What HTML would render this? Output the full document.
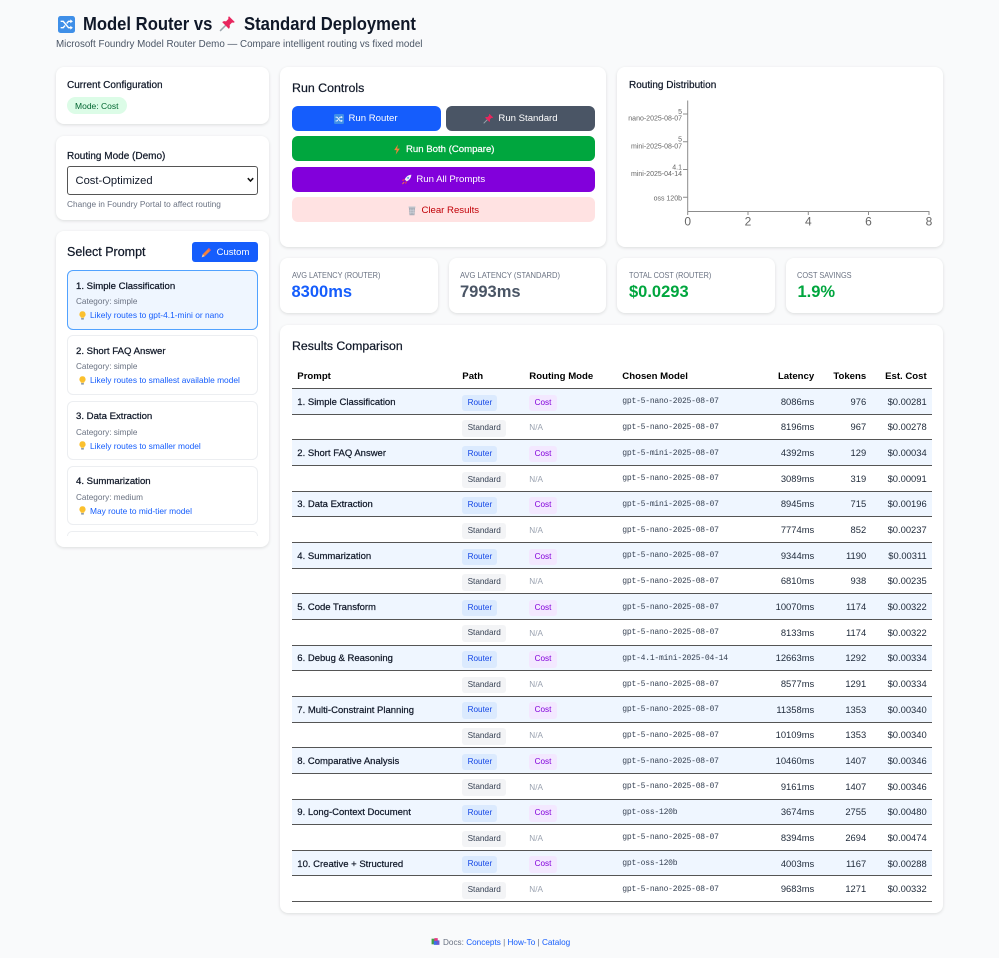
<!DOCTYPE html>
<html lang="en"><head><meta charset="utf-8"><title>Model Router vs Standard Deployment</title>
<style>
*{box-sizing:border-box;margin:0;padding:0}
html,body{width:999px;height:958px;overflow:hidden;background:#f9fafb;font-family:"Liberation Sans","Noto Sans CJK JP",sans-serif;color:#101828}
.a{position:absolute;white-space:nowrap}
.card{position:absolute;background:#fff;border-radius:8px;box-shadow:0 1px 3px rgba(0,0,0,.12)}
svg{display:inline-block;vertical-align:middle}
.btn{position:absolute;border-radius:6px;color:#fff;font-size:9.6px;display:flex;align-items:center;justify-content:center;gap:4px;height:25px;padding-top:1.5px}
.pc{position:absolute;left:67px;width:191px;height:59.5px;background:#fff;border:1px solid #eceef1;border-radius:6px}
.pc b{position:absolute;left:8px;top:9.5px;font-size:9.6px;font-weight:400;-webkit-text-stroke:.25px #101828;white-space:nowrap;color:#101828}
.pc i{position:absolute;left:8px;top:26px;font-style:normal;font-size:8.2px;color:#6a7282;white-space:nowrap}
.pc u{position:absolute;left:9.5px;top:39px;text-decoration:none;font-size:8.4px;color:#155dfc;white-space:nowrap}
.pc u svg{position:absolute;left:0;top:.5px}
.pc u span{padding-left:12.5px}
.sl{position:absolute;top:271px;font-size:8.2px;color:#6a7282;white-space:nowrap;transform-origin:left center}
.sv{position:absolute;top:283px;font-size:16.5px;font-weight:700;white-space:nowrap}
#t{position:absolute;left:292px;top:363px;width:640px;font-size:9.4px;color:#1e2939}
.r{display:grid;grid-template-columns:165px 67px 93px 133px 69.5px 52px 60.5px;height:25.67px;align-items:center;border-bottom:1px solid #555}
.r>span{padding:0 5.3px;white-space:nowrap}
.h{height:26px;border-bottom:1px solid #555;color:#000;font-size:9.6px}
.h>span{font-weight:700;position:relative;top:1px}
.p{-webkit-text-stroke:.22px #101828;color:#101828;font-size:9.5px;position:relative;top:1px}
.o{background:#eff6ff}
.ra{text-align:right}
.m{font-family:"Liberation Mono","DejaVu Sans Mono",monospace;font-size:8.05px;letter-spacing:-.24px;color:#364153;position:relative;top:.5px}
.bd{display:inline-block;font-style:normal;font-size:8.2px;line-height:16px;height:16.5px;padding:0 5.3px;border-radius:3px;position:relative;top:1.5px}
.ro{background:#dbeafe;color:#1447e6}.co{background:#f3e8ff;color:#8200db}.st{background:#f3f4f6;color:#364153}
.na{color:#99a1af;font-size:8.2px;position:relative;top:1px}
a{color:#155dfc;text-decoration:none}
</style></head><body>
<svg width="0" height="0" style="position:absolute"><defs>
<symbol id="sh" viewBox="0 0 16 16"><rect width="16" height="16" rx="2.4" fill="#3f8fe8"/><path d="M2.5 5h2.4l5 6h2M2.5 11h2.4l1.7-2M8.2 7 9.9 5h2" fill="none" stroke="#fff" stroke-width="1.4"/><path d="M11.6 3.2 14 5l-2.4 1.800zM11.6 9.200 14 11l-2.400 1.800z" fill="#fff"/></symbol>
<symbol id="pin" viewBox="0 0 16 16"><path d="M1 15 6.500 9.500" stroke="#9aa5ad" stroke-width="1.400"/><path d="M9.400 1.200 14.800 6.600c-.7.8-1.700.8-2.500.5L10 9.400c.5 1.400.2 2.700-.7 3.600L3 6.700c.9-.9 2.200-1.200 3.600-.7l2.300-2.300c-.3-.8-.3-1.800.5-2.500z" fill="#e8265e"/></symbol>
<symbol id="bolt" viewBox="0 0 16 16"><path d="M9.500 0 3.500 9h4l-1.500 7 6.500-9.500H8.200z" fill="#f4813c"/></symbol>
<symbol id="rk" viewBox="0 0 16 16"><path d="M15 1c-4.500.2-7.500 2.600-9.700 6.800l3 3C12.500 8.500 14.800 5.500 15 1z" fill="#eeeef6"/><circle cx="10.300" cy="5.700" r="1.300" fill="#3f8fe8"/><path d="M5.500 7.500 2.500 8l-1 2 3-.3zM8.500 10.500 8 13.500l-2 1 .3-3z" fill="#e8345a"/><path d="M4.500 11.500c-1.500.5-2.500 1.800-3 3.500 1.700-.5 3-1.500 3.500-3z" fill="#f4813c"/></symbol>
<symbol id="tr" viewBox="0 0 16 16"><path d="M3 2.500h10l-1 13H4z" fill="#a9aeb8"/><path d="M2.500 1.500h11v2h-11z" fill="#c4c8d0"/><path d="M5.500 5v9M8 5v9M10.500 5v9M4 8h8M4 11h8" stroke="#d5d8df" stroke-width=".7"/></symbol>
<symbol id="pe" viewBox="0 0 16 16"><path d="M11.500 1.500 14.500 4.500 5.500 13.500 2.500 10.500z" fill="#f4813c"/><path d="M2.500 10.500 1 15l4.500-1.500z" fill="#f8c9a0"/><path d="M11.500 1.500 14.500 4.500 13 6 10 3z" fill="#e8556a"/></symbol>
<symbol id="bu" viewBox="0 0 16 16"><path d="M8 .5a5.500 5.500 0 0 0-3 10.100V12h6v-1.400A5.500 5.500 0 0 0 8 .5z" fill="#fbc02d"/><rect x="5.500" y="12.500" width="5" height="2.800" rx=".8" fill="#8d9aa5"/></symbol>
<symbol id="bk" viewBox="0 0 16 16"><rect x="1" y="3" width="6" height="10" fill="#43a047"/><rect x="6" y="2" width="6" height="10" fill="#e53985"/><rect x="5" y="7" width="6" height="7" fill="#3f6fe8"/><rect x="10" y="6" width="5" height="8" fill="#6a5acd"/></symbol>
</defs></svg>

<svg class="a" style="left:58px;top:15.5px" width="17" height="17"><use href="#sh"/></svg>
<div class="a" style="left:83px;top:11.5px;font-size:18.3px;line-height:23px;font-weight:700;color:#101828;transform:scaleX(.91);transform-origin:left center">Model Router vs</div>
<svg class="a" style="left:219px;top:15px" width="17" height="17"><use href="#pin"/></svg>
<div class="a" style="left:243.5px;top:11.5px;font-size:18.3px;line-height:23px;font-weight:700;color:#101828;transform:scaleX(.91);transform-origin:left center">Standard Deployment</div>
<div class="a" style="left:56px;top:37.5px;font-size:9.8px;line-height:13px;color:#4a5565">Microsoft Foundry Model Router Demo — Compare intelligent routing vs fixed model</div>

<div class="card" style="left:56px;top:67px;width:213px;height:57px"></div>
<div class="a" style="left:67px;top:80px;font-size:10px;line-height:12px;-webkit-text-stroke:.22px #101828">Current Configuration</div>
<div class="a" style="left:67px;top:97px;width:59.5px;height:17px;border-radius:9px;background:#dcfce7;color:#016630;font-size:8.5px;line-height:18px;text-align:center">Mode: Cost</div>

<div class="card" style="left:56px;top:136px;width:213px;height:84px"></div>
<div class="a" style="left:67px;top:151px;font-size:10px;line-height:12px;-webkit-text-stroke:.22px #101828">Routing Mode (Demo)</div>
<div class="a" style="left:67px;top:166px;width:191px;height:29px;border:1px solid #555;border-radius:3px;background:#fff;font-size:11.2px;line-height:29px;padding-left:7.5px;color:#101828">Cost-Optimized<svg style="position:absolute;right:3px;top:10px" width="7" height="6" viewBox="0 0 7 6"><path d="M.8 1.200 3.500 4 6.200 1.200" fill="none" stroke="#111" stroke-width="1.500"/></svg></div>
<div class="a" style="left:67px;top:199px;font-size:8.3px;line-height:11px;color:#6a7282">Change in Foundry Portal to affect routing</div>

<div class="card" style="left:56px;top:231px;width:213px;height:316px"></div>
<div class="a" style="left:67px;top:244px;font-size:12.5px;line-height:16px;-webkit-text-stroke:.22px #101828">Select Prompt</div>
<div class="btn" style="left:192px;top:242px;width:66px;height:20px;background:#155dfc;border-radius:3px;font-size:9.5px;padding-top:0"><svg width="11" height="11"><use href="#pe"/></svg><span style="padding-left:1px">Custom</span></div>
<div class="pc" style="top:270px;background:#eff6ff;border-color:#51a2ff"><b>1. Simple Classification</b><i>Category: simple</i><u><svg width="9" height="9"><use href="#bu"/></svg><span>Likely routes to gpt-4.1-mini or nano</span></u></div>
<div class="pc" style="top:335.3px"><b>2. Short FAQ Answer</b><i>Category: simple</i><u><svg width="9" height="9"><use href="#bu"/></svg><span>Likely routes to smallest available model</span></u></div>
<div class="pc" style="top:400.5px"><b>3. Data Extraction</b><i>Category: simple</i><u><svg width="9" height="9"><use href="#bu"/></svg><span>Likely routes to smaller model</span></u></div>
<div class="pc" style="top:465.7px"><b>4. Summarization</b><i>Category: medium</i><u><svg width="9" height="9"><use href="#bu"/></svg><span>May route to mid-tier model</span></u></div>
<div class="a" style="left:67px;top:530.7px;width:191px;height:5.3px;background:#fff;border:1px solid #eceef1;border-bottom:0;border-radius:6px 6px 0 0"></div>

<div class="card" style="left:280px;top:67px;width:326px;height:180px"></div>
<div class="a" style="left:292px;top:80px;font-size:12.4px;line-height:16px;-webkit-text-stroke:.22px #101828">Run Controls</div>
<div class="btn" style="left:291.5px;top:105.5px;width:149px;background:#155dfc"><svg width="10" height="10"><use href="#sh"/></svg> Run Router</div>
<div class="btn" style="left:446px;top:105.5px;width:149px;background:#4a5565"><svg width="11" height="11"><use href="#pin"/></svg> Run Standard</div>
<div class="btn" style="left:291.5px;top:136px;width:303.5px;background:#00a63e;-webkit-text-stroke:.2px #fff"><svg width="10" height="11"><use href="#bolt"/></svg> Run Both (Compare)</div>
<div class="btn" style="left:291.5px;top:166.5px;width:303.5px;background:#8200db"><svg width="11" height="11"><use href="#rk"/></svg> Run All Prompts</div>
<div class="btn" style="left:291.5px;top:197px;width:303.5px;background:#ffe2e2;color:#c10007"><svg width="10" height="11"><use href="#tr"/></svg> Clear Results</div>

<div class="card" style="left:617px;top:67px;width:326px;height:180px"></div>
<div class="a" style="left:629px;top:80px;font-size:10px;line-height:12px;-webkit-text-stroke:.22px #101828">Routing Distribution</div>
<svg class="a" style="left:617px;top:90px" width="326" height="140" viewBox="617 90 326 140" font-family="Liberation Sans,sans-serif" fill="#666">
<path d="M687.7 100.5V211.500M683 114h4.700M683 141.700h4.700M683 169.500h4.700M683 197.300h4.700M687.200 211.500H929.500M687.700 211V215M748 211V215M808.300 211V215M868.500 211V215M929 211V215" fill="none" stroke="#8c8c8c" stroke-width="1"/>
<g font-size="7" text-anchor="end">
<text x="682" y="114">5</text><text x="682" y="120.500">nano-2025-08-07</text>
<text x="682" y="141.700">5</text><text x="682" y="148.300">mini-2025-08-07</text>
<text x="682" y="169.500">4.1</text><text x="682" y="176">mini-2025-04-14</text>
<text x="682" y="200.500">oss 120b</text></g>
<g font-size="12" text-anchor="middle"><text x="687.700" y="225.500">0</text><text x="748" y="225.500">2</text><text x="808.300" y="225.500">4</text><text x="868.500" y="225.500">6</text><text x="929" y="225.500">8</text></g>
</svg>

<div class="card" style="left:280px;top:258px;width:158px;height:55px"></div>
<div class="card" style="left:449px;top:258px;width:157px;height:55px"></div>
<div class="card" style="left:617px;top:258px;width:158px;height:55px"></div>
<div class="card" style="left:786px;top:258px;width:157px;height:55px"></div>
<div class="sl" style="left:292px;transform:scaleX(.9)">AVG LATENCY (ROUTER)</div><div class="sv" style="left:291.5px;color:#155dfc">8300ms</div>
<div class="sl" style="left:460px;transform:scaleX(.925)">AVG LATENCY (STANDARD)</div><div class="sv" style="left:460px;color:#4a5565">7993ms</div>
<div class="sl" style="left:629px;transform:scaleX(.89)">TOTAL COST (ROUTER)</div><div class="sv" style="left:629px;color:#00a63e">$0.0293</div>
<div class="sl" style="left:797px;transform:scaleX(.9)">COST SAVINGS</div><div class="sv" style="left:797.5px;color:#00a63e">1.9%</div>

<div class="card" style="left:280px;top:325px;width:663px;height:588px"></div>
<div class="a" style="left:292px;top:338px;font-size:12.3px;line-height:16px;-webkit-text-stroke:.22px #101828">Results Comparison</div>
<div id="t">
<div class="r h"><span>Prompt</span><span>Path</span><span>Routing Mode</span><span>Chosen Model</span><span class="ra">Latency</span><span class="ra">Tokens</span><span class="ra">Est. Cost</span></div>
<div class="r o"><span class="p">1. Simple Classification</span><span><i class="bd ro">Router</i></span><span><i class="bd co">Cost</i></span><span class="m">gpt-5-nano-2025-08-07</span><span class="ra">8086ms</span><span class="ra">976</span><span class="ra">$0.00281</span></div>
<div class="r"><span></span><span><i class="bd st">Standard</i></span><span class="na">N/A</span><span class="m">gpt-5-nano-2025-08-07</span><span class="ra">8196ms</span><span class="ra">967</span><span class="ra">$0.00278</span></div>
<div class="r o"><span class="p">2. Short FAQ Answer</span><span><i class="bd ro">Router</i></span><span><i class="bd co">Cost</i></span><span class="m">gpt-5-mini-2025-08-07</span><span class="ra">4392ms</span><span class="ra">129</span><span class="ra">$0.00034</span></div>
<div class="r"><span></span><span><i class="bd st">Standard</i></span><span class="na">N/A</span><span class="m">gpt-5-nano-2025-08-07</span><span class="ra">3089ms</span><span class="ra">319</span><span class="ra">$0.00091</span></div>
<div class="r o"><span class="p">3. Data Extraction</span><span><i class="bd ro">Router</i></span><span><i class="bd co">Cost</i></span><span class="m">gpt-5-mini-2025-08-07</span><span class="ra">8945ms</span><span class="ra">715</span><span class="ra">$0.00196</span></div>
<div class="r"><span></span><span><i class="bd st">Standard</i></span><span class="na">N/A</span><span class="m">gpt-5-nano-2025-08-07</span><span class="ra">7774ms</span><span class="ra">852</span><span class="ra">$0.00237</span></div>
<div class="r o"><span class="p">4. Summarization</span><span><i class="bd ro">Router</i></span><span><i class="bd co">Cost</i></span><span class="m">gpt-5-nano-2025-08-07</span><span class="ra">9344ms</span><span class="ra">1190</span><span class="ra">$0.00311</span></div>
<div class="r"><span></span><span><i class="bd st">Standard</i></span><span class="na">N/A</span><span class="m">gpt-5-nano-2025-08-07</span><span class="ra">6810ms</span><span class="ra">938</span><span class="ra">$0.00235</span></div>
<div class="r o"><span class="p">5. Code Transform</span><span><i class="bd ro">Router</i></span><span><i class="bd co">Cost</i></span><span class="m">gpt-5-nano-2025-08-07</span><span class="ra">10070ms</span><span class="ra">1174</span><span class="ra">$0.00322</span></div>
<div class="r"><span></span><span><i class="bd st">Standard</i></span><span class="na">N/A</span><span class="m">gpt-5-nano-2025-08-07</span><span class="ra">8133ms</span><span class="ra">1174</span><span class="ra">$0.00322</span></div>
<div class="r o"><span class="p">6. Debug &amp; Reasoning</span><span><i class="bd ro">Router</i></span><span><i class="bd co">Cost</i></span><span class="m">gpt-4.1-mini-2025-04-14</span><span class="ra">12663ms</span><span class="ra">1292</span><span class="ra">$0.00334</span></div>
<div class="r"><span></span><span><i class="bd st">Standard</i></span><span class="na">N/A</span><span class="m">gpt-5-nano-2025-08-07</span><span class="ra">8577ms</span><span class="ra">1291</span><span class="ra">$0.00334</span></div>
<div class="r o"><span class="p">7. Multi-Constraint Planning</span><span><i class="bd ro">Router</i></span><span><i class="bd co">Cost</i></span><span class="m">gpt-5-nano-2025-08-07</span><span class="ra">11358ms</span><span class="ra">1353</span><span class="ra">$0.00340</span></div>
<div class="r"><span></span><span><i class="bd st">Standard</i></span><span class="na">N/A</span><span class="m">gpt-5-nano-2025-08-07</span><span class="ra">10109ms</span><span class="ra">1353</span><span class="ra">$0.00340</span></div>
<div class="r o"><span class="p">8. Comparative Analysis</span><span><i class="bd ro">Router</i></span><span><i class="bd co">Cost</i></span><span class="m">gpt-5-nano-2025-08-07</span><span class="ra">10460ms</span><span class="ra">1407</span><span class="ra">$0.00346</span></div>
<div class="r"><span></span><span><i class="bd st">Standard</i></span><span class="na">N/A</span><span class="m">gpt-5-nano-2025-08-07</span><span class="ra">9161ms</span><span class="ra">1407</span><span class="ra">$0.00346</span></div>
<div class="r o"><span class="p">9. Long-Context Document</span><span><i class="bd ro">Router</i></span><span><i class="bd co">Cost</i></span><span class="m">gpt-oss-120b</span><span class="ra">3674ms</span><span class="ra">2755</span><span class="ra">$0.00480</span></div>
<div class="r"><span></span><span><i class="bd st">Standard</i></span><span class="na">N/A</span><span class="m">gpt-5-nano-2025-08-07</span><span class="ra">8394ms</span><span class="ra">2694</span><span class="ra">$0.00474</span></div>
<div class="r o"><span class="p">10. Creative + Structured</span><span><i class="bd ro">Router</i></span><span><i class="bd co">Cost</i></span><span class="m">gpt-oss-120b</span><span class="ra">4003ms</span><span class="ra">1167</span><span class="ra">$0.00288</span></div>
<div class="r"><span></span><span><i class="bd st">Standard</i></span><span class="na">N/A</span><span class="m">gpt-5-nano-2025-08-07</span><span class="ra">9683ms</span><span class="ra">1271</span><span class="ra">$0.00332</span></div>
</div>

<div class="a" style="left:431px;top:937px;font-size:8.2px;line-height:12px;color:#6a7282"><svg width="9" height="9" style="margin-right:3px;vertical-align:-1px"><use href="#bk"/></svg>Docs: <a href="#">Concepts</a> | <a href="#">How-To</a> | <a href="#">Catalog</a></div>
</body></html>
